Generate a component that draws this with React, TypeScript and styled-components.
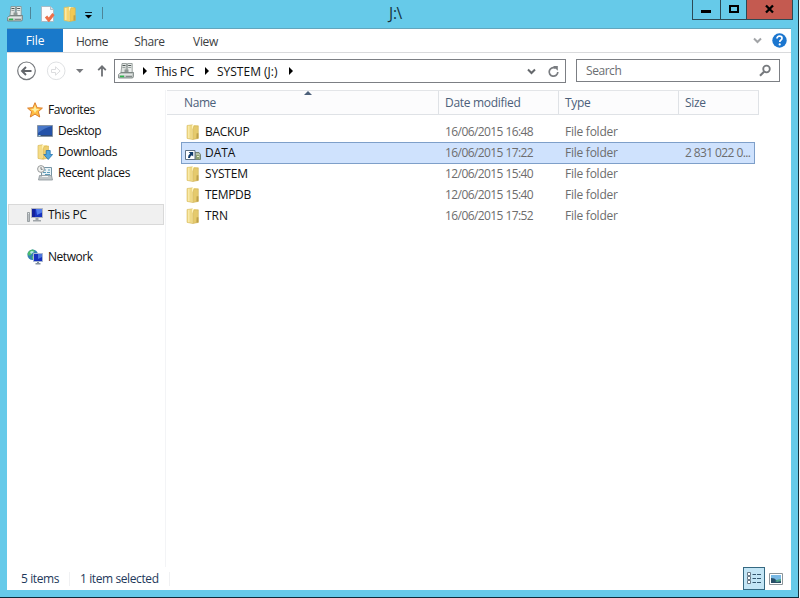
import React from "react";
import styled, { createGlobalStyle } from "styled-components";

const GlobalStyle = createGlobalStyle`
  * { box-sizing: border-box; }
  body {
    margin: 0;
    width: 800px;
    height: 598px;
    overflow: hidden;
    background: #f4f6f8;
    font-family: "Open Sans", "Noto Sans", sans-serif;
    font-size: 12px;
  }
  svg { display: block; flex: none; }
`;

const Window = styled.div`
  width: 799px;
  height: 598px;
  background: #66cae9;
  border-right: 1px solid #17323f;
  border-bottom: 1px solid #0c2c3a;
  display: flex;
  flex-direction: column;
`;

const TitleBar = styled.header`
  height: 28px;
  display: grid;
  grid-template-columns: 345px 101px 1fr;
  flex: none;
`;

const QuickAccess = styled.div`
  display: flex;
  height: 28px;
  align-items: center;
  padding-left: 7px;
`;

const Rule = styled.span<{ $gap: number }>`
  width: 1px;
  height: 12px;
  margin-left: ${(p) => p.$gap}px;
  margin-bottom: 2px;
  background: #4e8598;
`;

const Caption = styled.h1`
  margin: 0;
  font-size: 15.5px;
  font-weight: 400;
  line-height: 27px;
  letter-spacing: -0.35px;
  text-align: center;
  color: #17323d;
`;

const WindowButtons = styled.div`
  display: flex;
  justify-self: end;
  margin-right: 5px;
  height: 20px;
  border: 1px solid #2c4a56;
  border-top: 0;
`;

const WindowButton = styled.button<{ $w: number; $close?: boolean }>`
  width: ${(p) => p.$w}px;
  height: 19px;
  padding: 0;
  border: 0;
  border-left: ${(p) => (p.$w === 27 ? "0" : "1px solid #2c4a56")};
  background: ${(p) => (p.$close ? "#c45a50" : "transparent")};
  display: flex;
  justify-content: center;
`;

const Client = styled.main`
  width: 784px;
  height: 562px;
  margin-left: 7px;
  background: #fff;
  border-top: 1px solid #63a6bd;
  display: flex;
  flex-direction: column;
`;

const Ribbon = styled.nav`
  height: 24px;
  flex: none;
  display: flex;
  border-bottom: 1px solid #d9dadc;
`;

const Tab = styled.div<{ $w: number; $active?: boolean; $ls?: number }>`
  width: ${(p) => p.$w}px;
  height: ${(p) => (p.$active ? 23 : 24)}px;
  line-height: ${(p) => (p.$active ? 24 : 26)}px;
  text-align: center;
  letter-spacing: ${(p) => p.$ls ?? -0.35}px;
  color: ${(p) => (p.$active ? "#fff" : "#3b3e42")};
  background: ${(p) => (p.$active ? "#1979ca" : "transparent")};
`;

const RibbonTools = styled.div`
  display: flex;
  margin-left: auto;
  align-items: center;
  gap: 10px;
  padding-right: 4px;
`;

const AddressRow = styled.div`
  height: 37px;
  flex: none;
  display: flex;
  padding-top: 6px;
`;

const NavButtons = styled.div`
  width: 107px;
  height: 24px;
  flex: none;
`;

const Field = styled.div<{ $w: number }>`
  width: ${(p) => p.$w}px;
  height: 24px;
  border: 1px solid #7c7f84;
  display: flex;
  align-items: center;
  padding-left: 3px;
`;

const SearchField = styled(Field)`
  height: 23px;
  margin-left: 10px;
  padding: 0 7px 0 9px;
  justify-content: space-between;
`;

const Label = styled.span<{ $ls?: number; $color?: string }>`
  white-space: nowrap;
  letter-spacing: ${(p) => p.$ls ?? -0.25}px;
  color: ${(p) => p.$color ?? "#111"};
`;

const Crumb = styled(Label)<{ $w: number }>`
  width: ${(p) => p.$w}px;
`;

const CrumbArrow = styled.span<{ $gap: number }>`
  margin-left: ${(p) => p.$gap}px;
  margin-right: 8px;
  width: 0;
  border-left: 4px solid #000;
  border-top: 4px solid transparent;
  border-bottom: 4px solid transparent;
`;

const AddressTools = styled.div`
  display: flex;
  gap: 11px;
  margin-left: auto;
  padding-right: 5px;
  align-items: center;
`;

const Body = styled.div`
  flex: 1;
  display: flex;
  min-height: 0;
`;

const Sidebar = styled.aside`
  width: 159px;
  flex: none;
  padding-top: 9px;
  border-right: 1px solid #f3f4f6;
`;

const Place = styled.div<{ $level?: number; $selected?: boolean; $gap?: boolean }>`
  height: 21px;
  width: 156px;
  margin-left: 1px;
  margin-top: ${(p) => (p.$gap ? 21 : 0)}px;
  padding-left: ${(p) => (p.$level ? 28 : 18)}px;
  display: flex;
  align-items: center;
  gap: 5px;
  border: 1px solid ${(p) => (p.$selected ? "#d9d9d9" : "transparent")};
  background: ${(p) => (p.$selected ? "#f0f0f0" : "transparent")};
`;

const Files = styled.section`
  flex: 1;
`;

const columns = "272px 120px 120px 80px";

const HeaderRow = styled.div`
  display: grid;
  grid-template-columns: ${columns};
  width: 592px;
  height: 25px;
  margin-left: 1px;
  background: #fcfcfd;
  border-top: 1px solid #e3e5e8;
  border-bottom: 1px solid #dfe2e6;
`;

const HeaderCell = styled.div<{ $pad: number; $ls?: number }>`
  position: relative;
  padding-left: ${(p) => p.$pad}px;
  line-height: 24px;
  letter-spacing: ${(p) => p.$ls ?? -0.3}px;
  color: #4c607a;
  border-right: 1px solid #dfe2e6;
`;

const SortMark = styled.i`
  position: absolute;
  left: 137px;
  top: 0;
  border-left: 4px solid transparent;
  border-right: 4px solid transparent;
  border-bottom: 4px solid #4c607a;
`;

const Rows = styled.div`
  padding: 6px 0 0 15px;
`;

const FileRow = styled.div<{ $selected?: boolean }>`
  display: grid;
  grid-template-columns: 24px 240px 120px 120px 70px;
  width: 574px;
  height: ${(p) => (p.$selected ? 22 : 21)}px;
  margin-bottom: ${(p) => (p.$selected ? -1 : 0)}px;
  padding-bottom: ${(p) => (p.$selected ? 1 : 0)}px;
  align-items: center;
  background: ${(p) => (p.$selected ? "#cfe2fd" : "transparent")};
  box-shadow: ${(p) => (p.$selected ? "inset 0 0 0 1px #7e9fc9" : "none")};
`;

const IconSlot = styled.span`
  padding-left: 4px;
`;

const StatusBar = styled.footer`
  height: 23px;
  flex: none;
  display: flex;
  align-items: center;
  padding-left: 14px;
`;

const StatusItem = styled(Label)<{ $w: number }>`
  width: ${(p) => p.$w}px;
  line-height: 14px;
  margin-right: 10px;
  border-right: 1px solid #f0f1f3;
`;

const ViewButtons = styled.div`
  margin-left: auto;
  display: flex;
  align-items: center;
`;

const ViewButton = styled.div<{ $on?: boolean }>`
  width: ${(p) => (p.$on ? 22 : 26)}px;
  height: 23px;
  display: flex;
  align-items: center;
  justify-content: center;
  padding-right: ${(p) => (p.$on ? 0 : 4)}px;
  border: ${(p) => (p.$on ? "1px solid #356982" : "0")};
  background: ${(p) => (p.$on ? "#c3e5f5" : "transparent")};
`;

const DriveIcon = () => (
  <svg width="16" height="16" viewBox="0 0 16 16">
    <path d="M4 .5h4.6l-.6 9H3z" fill="#dfe3e1" stroke="#858e8c" strokeWidth=".8" />
    <path d="M9.6.5h4.6v9H9z" fill="#e9eceb" stroke="#858e8c" strokeWidth=".8" />
    <path d="M4.5 2.5h3M10.2 2.5h3" stroke="#4f5856" />
    <path d="M4.4 4.5h3M10.2 4.5h3" stroke="#99a29f" />
    <path d="M6.5 6.5h4v3.5h-4z" fill="#8f9895" />
    <path d="m3 9.5-2.4 2V15h14l1-1.5v-4z" fill="#bcc3c0" stroke="#707a77" strokeWidth=".8" />
    <path d="M1.2 11.8h13" stroke="#f4f6f5" />
    <path d="M2 13.4h4" stroke="#2bb54a" strokeWidth="1.6" />
    <path d="M8 13.4h6" stroke="#7c8582" />
  </svg>
);

const PropertiesIcon = () => (
  <svg width="16" height="16" viewBox="0 0 16 16">
    <path d="M1.5.5h9l3 3v12h-12z" fill="#fbfcfd" stroke="#a5b3bd" strokeWidth=".8" />
    <path d="M10.5.5v3h3" fill="#dce5ea" stroke="#98a8b2" strokeWidth=".7" />
    <path d="M6 10.5 8.8 14l4.7-6" fill="none" stroke="#eb7049" strokeWidth="3" />
  </svg>
);

const FolderIcon = ({ bright = false }: { bright?: boolean }) => (
  <svg width="16" height="16" viewBox="0 0 16 16">
    <path d="M2 1.5 7.5.8v14.7L2 14.4z" fill={bright ? "#f6d56f" : "#efd987"} stroke="#d9bd63" strokeWidth=".6" />
    <path d="M7 1h4.5v14H7z" fill="#fff4bd" />
    <path d="M9 1.8h4.3v12.6L7.8 15.5V5.2z" fill={bright ? "#f2c952" : "#e5ca6d"} stroke="#ceb055" strokeWidth=".6" />
    <path d="M11.6 9.3h1.8v5.1h-2z" fill="#bda04a" />
    <path d="M3.8 2v12" stroke="#fbedae" strokeWidth="1.3" />
  </svg>
);

const StarIcon = () => (
  <svg width="16" height="16" viewBox="0 0 16 16">
    <path d="m8 .7 2.1 5 5.3.4-4 3.5 1.3 5.4L8 12.1 3.3 15l1.3-5.4-4-3.5 5.3-.4z" fill="#ffbd42" stroke="#dd7f2b" />
    <path d="m8 3 1.1 3.8 3.6.3-3.4 1.6L8 10.9 6.6 8.5 3.5 7.1l3.3-.3z" fill="#fff0a1" />
  </svg>
);

const DesktopIcon = () => (
  <svg width="16" height="16" viewBox="0 0 16 16">
    <path d="M.5 2.5h15v11H.5z" fill="#2452a8" stroke="#8493a5" />
    <path d="M1 3h14Q7 5 1 10z" fill="#4a78c8" />
    <path d="M1 12.5h14" stroke="#354e75" />
    <path d="M1.5 12.5h2" stroke="#a6d9e8" />
  </svg>
);

const DownloadsIcon = () => (
  <svg width="16" height="16" viewBox="0 0 16 16">
    <path d="M1 1.5 5.5.8v14.5L1 14.4z" fill="#f5dc86" stroke="#d9b95b" strokeWidth=".7" />
    <path d="M5 1h5v13H5z" fill="#fff0b0" />
    <path d="M7.5 2h4v12L6 15.3V5z" fill="#edce6e" stroke="#d4b253" strokeWidth=".6" />
    <path d="M9.2 6.5h4v4h2.4l-4.4 5-4.4-5h2.4z" fill="#4fa6df" stroke="#2674ad" strokeWidth=".8" />
  </svg>
);

const RecentIcon = () => (
  <svg width="16" height="16" viewBox="0 0 16 16">
    <path d="M4.5 2.5h10v9h-10z" fill="#e9f3f7" stroke="#7594a4" />
    <path d="M7 5h2m2 0h2M6 7.5h3m1 0h3M8 9.5h5" stroke="#5d9cb8" />
    <path d="M2.5 10.5h12l1 4.5H1.5z" fill="#c0c6c8" stroke="#8b9499" strokeWidth=".8" />
    <path d="M5 11.5h6" stroke="#f7f8f8" />
    <circle cx="4" cy="4" r="3.4" fill="#f2f2ef" stroke="#969a9b" />
    <path d="M4 2v2.3h1.7" fill="none" stroke="#596267" strokeWidth=".8" />
  </svg>
);

const PcIcon = () => (
  <svg width="16" height="16" viewBox="0 0 16 16">
    <path d="M.5 5.5h2v9h-2z" fill="#b8bec2" stroke="#8c9296" strokeWidth=".8" />
    <path d="M4.5 1.5h11v9h-11z" fill="#1732be" stroke="#b3b7c0" />
    <path d="M9 2h6v3.5L10 8z" fill="#507bed" />
    <path d="M5 2h3v8H5z" fill="#14219b" />
    <path d="M8.5 11h3v2h2.5v1.5H6V13h2.5z" fill="#9fa5a9" />
    <path d="M1 6.5h1" stroke="#e4e8eb" />
  </svg>
);

const NetworkIcon = () => (
  <svg width="16" height="16" viewBox="0 0 16 16">
    <circle cx="5.7" cy="5.7" r="5.3" fill="#3482b4" />
    <path d="M1 3.5Q3 .4 6 .6l2 2-2.5 1L4 6 2 6.7.5 5zM5 7l3 1-1 2.8-2-1z" fill="#4bbd6c" />
    <path d="M3 3q2-2 4 0L4 5z" fill="#b6e7e6" />
    <path d="M6.5 4.5h9v8h-9z" fill="#1530bd" stroke="#a9b7d1" />
    <path d="M11 5h4v3l-4 2z" fill="#4c76dc" />
    <path d="M10 13h2v1h1.5v1.5h-5V14H10z" fill="#81909d" />
  </svg>
);

const MountIcon = () => (
  <svg width="17" height="16" viewBox="0 0 17 16">
    <path d="M10 7.5h4l1.5 2v5H10z" fill="#b5c0a9" stroke="#6e7a69" strokeWidth=".9" />
    <path d="M11 10h3.5v4H11z" fill="#8da070" />
    <path d="M12 11.5h2" stroke="#e2e8cf" />
    <path d="M.5 5.5h9.5v9H.5z" fill="#fff" stroke="#5f7185" />
    <path d="M3.6 7h4.6v4.6L6.8 10.2Q5 11.2 5 13H3q0-3 2.2-4.4z" fill="#123c6c" />
  </svg>
);

const Chevron = ({ color = "#65686c" }: { color?: string }) => (
  <svg width="9" height="9" viewBox="0 0 9 9">
    <path d="M1 2.5 4.5 6 8 2.5" fill="none" stroke={color} strokeWidth="2" />
  </svg>
);

const NavIcons = () => (
  <svg width="107" height="24" viewBox="0 0 107 24">
    <circle cx="19.5" cy="11.8" r="8.8" fill="#fff" stroke="#74777b" strokeWidth="1.2" />
    <path d="M24.5 12h-9M19 8l-4 4 4 4" fill="none" stroke="#62656a" strokeWidth="1.9" />
    <circle cx="49.2" cy="11.8" r="8.8" fill="#fff" stroke="#dfe1e3" />
    <path d="M44.5 10.5h4V7.8l4.6 4.2-4.6 4.2v-2.7h-4z" fill="#fff" stroke="#dcdddf" />
    <path d="M69 10h7.5l-3.7 4z" fill="#77797d" />
    <path d="M95 17.5V7.5M91.2 11.2 95 7.3l3.8 3.9" fill="none" stroke="#6e7175" strokeWidth="1.8" />
  </svg>
);

const files = [
  { name: "BACKUP", date: "16/06/2015 16:48", ls: -0.3 },
  { name: "DATA", date: "16/06/2015 17:22", size: "2 831 022 0...", ls: -0.05 },
  { name: "SYSTEM", date: "12/06/2015 15:40", ls: -0.2 },
  { name: "TEMPDB", date: "12/06/2015 15:40", ls: -0.3 },
  { name: "TRN", date: "16/06/2015 17:52", ls: -0.05 },
];

export default function App() {
  return (
    <>
      <GlobalStyle />
      <Window>
        <TitleBar>
          <QuickAccess>
            <DriveIcon />
            <Rule $gap={7} />
            <svg width="9" height="1" />
            <PropertiesIcon />
            <svg width="6" height="1" />
            <FolderIcon bright />
            <svg width="26" height="16" viewBox="0 0 26 16">
              <path d="M7 6.5h7" stroke="#10202a" />
              <path d="M7 9h7l-3.5 3.5z" fill="#000" />
            </svg>
            <Rule $gap={-2} />
          </QuickAccess>
          <Caption>J:\</Caption>
          <WindowButtons>
            <WindowButton $w={27} aria-label="Minimize">
              <svg width="27" height="19"><path d="M8 10h10v3H8z" /></svg>
            </WindowButton>
            <WindowButton $w={26} aria-label="Maximize">
              <svg width="25" height="19"><path d="M9 6h8v6H9z" fill="none" stroke="#000" strokeWidth="2" /></svg>
            </WindowButton>
            <WindowButton $w={46} $close aria-label="Close">
              <svg width="45" height="19"><path d="m19 5.5 7 7m0-7-7 7" stroke="#000" strokeWidth="2.3" /></svg>
            </WindowButton>
          </WindowButtons>
        </TitleBar>
        <Client>
          <Ribbon>
            <Tab $w={56} $active $ls={-0.1}>File</Tab>
            <Tab $w={58} $ls={-0.45}>Home</Tab>
            <Tab $w={57}>Share</Tab>
            <Tab $w={55}>View</Tab>
            <RibbonTools>
              <Chevron color="#a2a4a7" />
              <svg width="15" height="15" viewBox="0 0 15 15">
                <circle cx="7.5" cy="7.5" r="7.2" fill="#1b76cf" />
                <path d="M5 5.5Q5 3.2 7.6 3.2 10 3.2 10 5.2q0 1.2-1.3 2-.9.6-.9 1.7" fill="none" stroke="#fff" strokeWidth="1.7" />
                <circle cx="7.7" cy="11.4" r="1.1" fill="#fff" />
              </svg>
            </RibbonTools>
          </Ribbon>
          <AddressRow>
            <NavButtons><NavIcons /></NavButtons>
            <Field $w={452}>
              <DriveIcon />
              <CrumbArrow $gap={9} />
              <Crumb $w={42} $ls={-0.2}>This PC</Crumb>
              <CrumbArrow $gap={8} />
              <Crumb $w={64} $ls={0}>SYSTEM (J:)</Crumb>
              <CrumbArrow $gap={8} />
              <AddressTools>
                <Chevron />
                <svg width="13" height="13" viewBox="0 0 13 13">
                  <path d="M8.7 3.2A4.3 4.3 0 1 0 10.8 7" fill="none" stroke="#797c80" strokeWidth="1.7" />
                  <path d="M6 1h4.8v4.8z" fill="#797c80" />
                </svg>
              </AddressTools>
            </Field>
            <SearchField $w={204}>
              <Label $color="#6b6e72" $ls={-0.45}>Search</Label>
              <svg width="14" height="14" viewBox="0 0 14 14">
                <circle cx="8.5" cy="5" r="3.3" fill="none" stroke="#76797d" strokeWidth="1.8" />
                <path d="m6 7.7-4 4" stroke="#76797d" strokeWidth="2.2" />
              </svg>
            </SearchField>
          </AddressRow>
          <Body>
            <Sidebar>
              <Place><StarIcon /><Label $ls={-0.45}>Favorites</Label></Place>
              <Place $level={1}><DesktopIcon /><Label $ls={-0.45}>Desktop</Label></Place>
              <Place $level={1}><DownloadsIcon /><Label $ls={-0.4}>Downloads</Label></Place>
              <Place $level={1}><RecentIcon /><Label $ls={-0.35}>Recent places</Label></Place>
              <Place $gap $selected><PcIcon /><Label>This PC</Label></Place>
              <Place $gap><NetworkIcon /><Label $ls={-0.45}>Network</Label></Place>
            </Sidebar>
            <Files>
              <HeaderRow>
                <HeaderCell $pad={17} $ls={-0.4}>Name<SortMark /></HeaderCell>
                <HeaderCell $pad={6}>Date modified</HeaderCell>
                <HeaderCell $pad={6}>Type</HeaderCell>
                <HeaderCell $pad={6}>Size</HeaderCell>
              </HeaderRow>
              <Rows>
                {files.map((f) => (
                  <FileRow key={f.name} $selected={!!f.size}>
                    <IconSlot>{f.size ? <MountIcon /> : <FolderIcon />}</IconSlot>
                    <Label $ls={f.ls}>{f.name}</Label>
                    <Label $color="#6d6d6d" $ls={-0.58}>{f.date}</Label>
                    <Label $color="#6d6d6d">File folder</Label>
                    <Label $color="#6d6d6d" $ls={-0.6}>{f.size}</Label>
                  </FileRow>
                ))}
              </Rows>
            </Files>
          </Body>
          <StatusBar>
            <StatusItem $w={49} $ls={-0.4} $color="#1e395b">5 items</StatusItem>
            <StatusItem $w={90} $ls={-0.4} $color="#1e395b">1 item selected</StatusItem>
            <ViewButtons>
              <ViewButton $on>
                <svg width="16" height="15" viewBox="0 0 16 15">
                  <path d="M1.5 1.5h3v3h-3zM1.5 5.5h3v3h-3zM1.5 9.5h3v3h-3z" fill="#fff" stroke="#687987" />
                  <path d="M6.5 3.5H10m1 0h4M6.5 7.5H10m1 0h4M6.5 11.5H10m1 0h4" stroke="#34576f" />
                </svg>
              </ViewButton>
              <ViewButton>
                <svg width="14" height="12" viewBox="0 0 14 12">
                  <path d="M.5.5h13v11H.5z" fill="#fff" stroke="#8b9499" />
                  <path d="M2 2h10v8H2z" fill="#79b9e5" />
                  <path d="M2 5q4 0 5 2l5 1v2H2z" fill="#294e67" />
                  <path d="M6 8q3-2 6-2v2L8 9z" fill="#51a78c" />
                </svg>
              </ViewButton>
            </ViewButtons>
          </StatusBar>
        </Client>
      </Window>
    </>
  );
}
